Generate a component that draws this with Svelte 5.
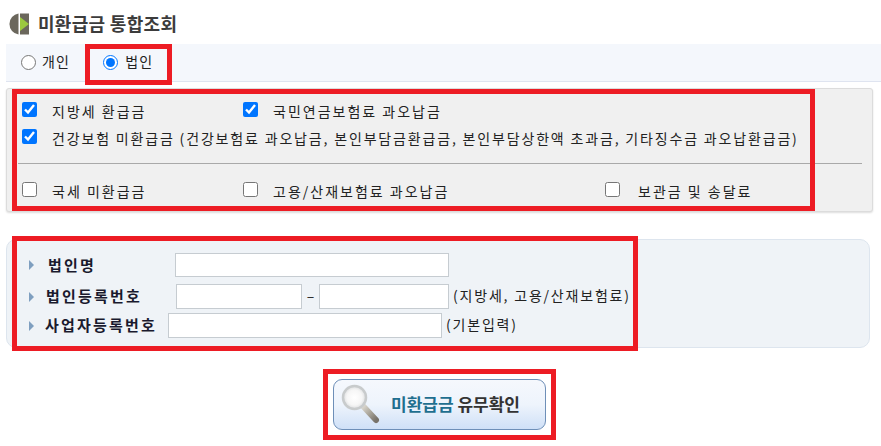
<script>
    let kind = $state("corp");

    const topChecks = [
        { label: "지방세 환급금", checked: true },
        { label: "국민연금보험료 과오납금", checked: true },
    ];
    const bottomChecks = ["국세 미환급금", "고용/산재보험료 과오납금", "보관금 및 송달료"];
</script>

<div class="page">
    <h1 class="title">
        <svg class="title-icon" width="21" height="22" viewBox="0 0 21 22">
            <path d="M9.5 0.6 A10.5 10.5 0 0 0 9.5 21.4 Z" fill="#6b675c" />
            <path d="M11 0.5 H20 V21.5 H11 Z" fill="#6b675c" />
            <path d="M11 4 L20 11 L11 18 Z" fill="#9cc93f" />
        </svg>
        <span>미환급금 통합조회</span>
    </h1>

    <div class="tabs">
        <label class="tab tab-person">
            <input type="radio" name="kind" value="person" bind:group={kind} />
            <span>개인</span>
        </label>
        <label class="tab tab-corp">
            <input type="radio" name="kind" value="corp" bind:group={kind} />
            <span>법인</span>
        </label>
        <div class="mark mark-tab"></div>
    </div>

    <section class="checks">
        <div class="check-grid">
            {#each topChecks as item}
                <label class="check">
                    <input type="checkbox" checked={item.checked} />
                    <span>{item.label}</span>
                </label>
            {/each}
        </div>
        <label class="check check-wide">
            <input type="checkbox" checked />
            <span>건강보험 미환급금 (건강보험료 과오납금, 본인부담금환급금, 본인부담상한액 초과금, 기타징수금 과오납환급금)</span>
        </label>
        <hr />
        <div class="check-grid">
            {#each bottomChecks as label}
                <label class="check">
                    <input type="checkbox" />
                    <span>{label}</span>
                </label>
            {/each}
        </div>
        <div class="mark mark-checks"></div>
    </section>

    <section class="form">
        <div class="row row-name">
            <span class="bullet"></span>
            <span class="field-label">법인명</span>
            <input class="text-input input-name" type="text" />
        </div>
        <div class="row row-reg">
            <span class="bullet"></span>
            <span class="field-label">법인등록번호</span>
            <input class="text-input input-reg" type="text" />
            <span class="dash">–</span>
            <input class="text-input input-reg2" type="text" />
            <span class="hint">(지방세, 고용/산재보험료)</span>
        </div>
        <div class="row row-biz">
            <span class="bullet"></span>
            <span class="field-label">사업자등록번호</span>
            <input class="text-input input-biz" type="text" />
            <span class="hint">(기본입력)</span>
        </div>
        <div class="mark mark-form"></div>
    </section>

    <div class="actions">
        <button class="search-btn" type="button">
            <svg class="lens" width="42" height="44" viewBox="0 0 42 44">
                <defs>
                    <radialGradient id="glass" cx="50%" cy="50%" r="55%">
                        <stop offset="0%" stop-color="#ffffff" />
                        <stop offset="60%" stop-color="#f6f6f6" />
                        <stop offset="100%" stop-color="#d4d6d8" />
                    </radialGradient>
                    <linearGradient id="handle" x1="0" y1="0" x2="1" y2="1">
                        <stop offset="0%" stop-color="#ddd9d0" />
                        <stop offset="50%" stop-color="#aaa69b" />
                        <stop offset="100%" stop-color="#77726a" />
                    </linearGradient>
                </defs>
                <path d="M22 23 L35 37" stroke="url(#handle)" stroke-width="6" stroke-linecap="round" />
                <circle cx="13.5" cy="14.5" r="11.5" fill="url(#glass)" stroke="#c8cbcc" stroke-width="2.5" />
            </svg>
            <span class="btn-text"><em>미환급금</em> 유무확인</span>
        </button>
        <div class="mark mark-btn"></div>
    </div>
</div>

<style>
    :global(body) {
        margin: 0;
        background: #fff;
    }

    .page {
        width: 881px;
        height: 446px;
        overflow: hidden;
        padding: 12px 0 0 6px;
        box-sizing: border-box;
        font-family: "Noto Sans CJK KR", "Noto Sans", sans-serif;
        color: #222;
    }

    .title {
        display: flex;
        align-items: center;
        gap: 8px;
        height: 24px;
        margin: 0 0 8px 3px;
        font-size: 18px;
        font-weight: 700;
        color: #3c3c3c;
        letter-spacing: 0.3px;
    }

    .title span {
        margin-top: -3px;
    }

    .tabs {
        position: relative;
        display: flex;
        height: 37px;
        background: #f4f7fc;
        border-bottom: 1px solid #dfe4f0;
        font-size: 14px;
        letter-spacing: 1.2px;
    }

    .tab {
        display: flex;
        align-items: center;
        gap: 6px;
    }

    .tab input {
        width: 15px;
        height: 15px;
        margin: 0;
    }

    .tab span {
        margin-top: -3px;
    }

    .tab-person {
        margin-left: 15px;
    }

    .tab-corp {
        margin-left: 33px;
        gap: 7px;
    }

    .checks {
        position: relative;
        box-sizing: border-box;
        width: 867px;
        height: 124px;
        margin-top: 6px;
        padding: 13px 10px 0 15px;
        background: #f0f0f0;
        border: 1px solid #dcdcdc;
        border-radius: 3px;
        box-shadow: 0 1px 2px #ddd;
        font-size: 14px;
    }

    .check-grid {
        display: grid;
        grid-template-columns: 221px 362px 1fr;
    }

    .check {
        display: flex;
        gap: 15px;
        height: 27px;
    }

    .check input {
        flex: none;
        width: 15px;
        height: 15px;
        margin: 0;
    }

    .check span {
        line-height: 19px;
        white-space: nowrap;
        letter-spacing: 2px;
    }

    .check-wide span {
        letter-spacing: 1.83px;
    }

    .check-grid .check:nth-child(3) {
        gap: 18px;
    }

    hr {
        height: 1px;
        margin: 7px 0 18px -4px;
        border: 0;
        background: #a9a9a9;
    }

    .form {
        position: relative;
        box-sizing: border-box;
        width: 864px;
        height: 109px;
        margin-top: 27px;
        padding-top: 13px;
        background: #eff3f7;
        border: 1px solid #dde5ee;
        border-radius: 10px;
        font-size: 14px;
    }

    .row {
        display: flex;
        align-items: center;
    }

    .row-name {
        height: 24px;
        margin-bottom: 7px;
    }

    .row-reg {
        height: 25px;
        margin-bottom: 4px;
    }

    .row-biz {
        height: 25px;
    }

    .bullet {
        flex: none;
        width: 0;
        height: 0;
        margin-left: 22px;
        border-left: 5px solid #7f9fc0;
        border-top: 5px solid transparent;
        border-bottom: 5px solid transparent;
    }

    .field-label {
        margin-top: -2px;
        font-size: 15px;
        font-weight: 700;
        color: #1a1a2e;
        letter-spacing: 2.2px;
        white-space: nowrap;
    }

    .row-name .field-label {
        width: 127px;
        margin-left: 14px;
    }

    .row-reg .field-label {
        width: 130px;
        margin-left: 12px;
    }

    .row-biz .field-label {
        width: 123px;
        margin-left: 11px;
    }

    .text-input {
        box-sizing: border-box;
        height: 100%;
        margin: 0;
        padding: 0;
        background: #fff;
        border: 1px solid #c6ccd1;
        border-radius: 0;
    }

    .input-name,
    .input-biz {
        width: 274px;
    }

    .input-reg {
        width: 126px;
    }

    .dash {
        width: 17px;
        margin-top: -4px;
        text-align: center;
    }

    .input-reg2 {
        width: 130px;
    }

    .hint {
        margin-left: 4px;
        margin-top: -3px;
        font-size: 14px;
        letter-spacing: 1.8px;
        white-space: nowrap;
    }

    .actions {
        position: relative;
        display: flex;
        width: 213px;
        margin: 31px 0 0 327px;
    }

    .search-btn {
        display: flex;
        align-items: center;
        box-sizing: border-box;
        width: 213px;
        height: 51px;
        padding: 0 0 0 7px;
        background: linear-gradient(#f5f8fd, #eef4fc 50%, #cfe0f7);
        border: 1px solid #6e8fb8;
        border-radius: 9px;
        font-family: inherit;
        cursor: pointer;
    }

    .btn-text {
        margin-left: 8px;
        margin-top: -2px;
        font-size: 17px;
        font-weight: 700;
        color: #333;
        white-space: nowrap;
    }

    .btn-text em {
        font-style: normal;
        color: #1f6f8f;
    }

    .mark {
        position: absolute;
        box-sizing: border-box;
        border: 5px solid #ed1c24;
        pointer-events: none;
    }

    .mark-tab {
        left: 79px;
        top: 0;
        width: 87px;
        height: 41px;
    }

    .mark-checks {
        left: 5px;
        top: 0;
        width: 803px;
        height: 122px;
    }

    .mark-form {
        left: 5px;
        top: -4px;
        width: 626px;
        height: 115px;
    }

    .mark-btn {
        left: -10px;
        top: -10px;
        width: 233px;
        height: 71px;
    }
</style>
